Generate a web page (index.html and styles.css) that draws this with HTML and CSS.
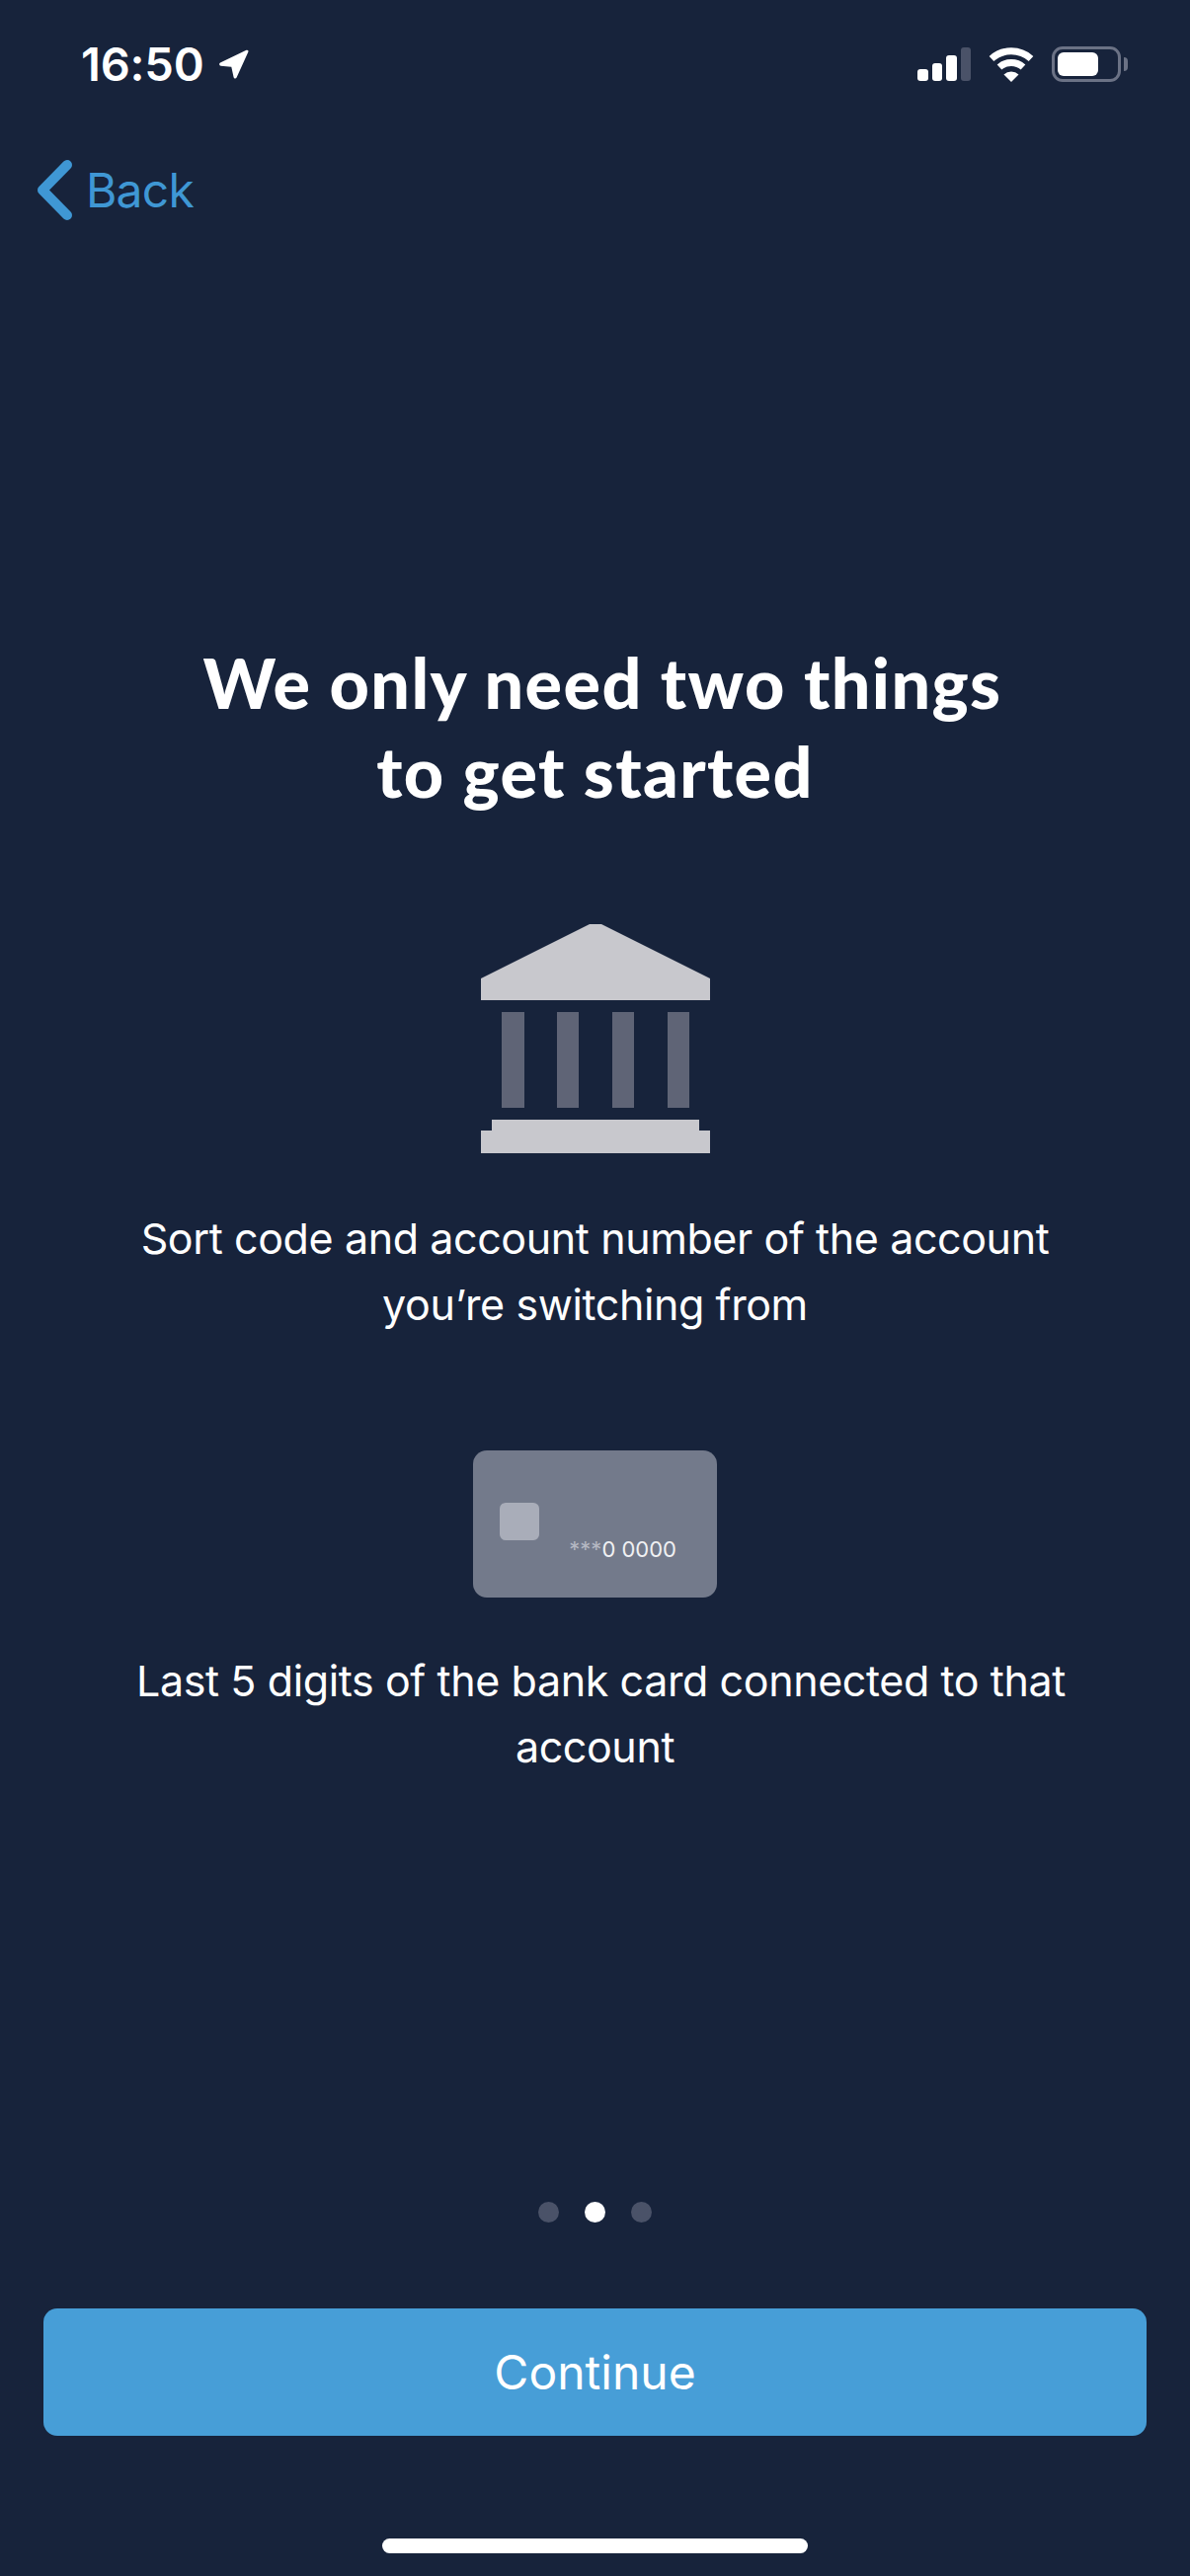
FILE: index.html
```html
<!DOCTYPE html>
<html lang="en">
<head>
  <meta charset="UTF-8" />
  <meta name="viewport" content="width=device-width, initial-scale=1.0" />
  <title>We only need two things to get started</title>
  <link rel="stylesheet" href="styles.css">
</head>
<body>
  <header class="status">
    <div class="time-wrap">
      <span class="time">16:50</span>
      <svg class="location" viewBox="0 0 32 32" aria-hidden="true">
        <path d="M2 14.500 28.500 1.800c1.300-.6 2.400.5 1.900 1.800L18.600 29.600c-.7 1.500-2.600 1.300-3-.3l-2.300-10.600L2.600 17.800C.9 17.500.6 15.300 2 14.500Z" />
      </svg>
    </div>
    <div class="status-icons">
      <div class="signal">
        <span class="bar bar-1"></span>
        <span class="bar bar-2"></span>
        <span class="bar bar-3"></span>
        <span class="bar bar-4"></span>
      </div>
      <svg class="wifi" viewBox="0 0 46 36" aria-hidden="true">
        <path d="M3 12.500a30 30 0 0 1 40 0" />
        <path d="M11 21a18 18 0 0 1 24 0" />
        <path class="wifi-dot" d="M23 36 15.500 28.500a11 11 0 0 1 15 0Z" />
      </svg>
      <div class="battery">
        <div class="battery-body"><div class="battery-level"></div></div>
        <div class="battery-nub"></div>
      </div>
    </div>
  </header>

  <nav class="nav">
    <a class="back">
      <svg class="chevron" viewBox="0 0 35 61" aria-hidden="true">
        <path d="M30 5 5 30.500 30 56" />
      </svg>
      <span>Back</span>
    </a>
  </nav>

  <main>
    <h1 class="title"><span class="nudge-title">We only need two things</span><br>to get started</h1>

    <section class="need need-bank">
      <svg class="bank" viewBox="0 0 232 232" aria-hidden="true">
        <path class="bank-light" d="M110 0h12L232 55v22H0V55Z" />
        <rect class="bank-dim" x="21" y="89" width="23" height="97" />
        <rect class="bank-dim" x="77" y="89" width="22" height="97" />
        <rect class="bank-dim" x="133" y="89" width="22" height="97" />
        <rect class="bank-dim" x="189" y="89" width="22" height="97" />
        <path class="bank-light" d="M11 198H221V209H232V232H0V209H11Z" />
      </svg>
      <p>Sort code and account number of the account<br>you’re switching from</p>
    </section>

    <section class="need need-card">
      <div class="card">
        <div class="chip"></div>
        <div class="card-number"><span class="stars">***</span>0 0000</div>
      </div>
      <p><span class="nudge-text">Last 5 digits of the bank card connected to that</span><br>account</p>
    </section>
  </main>

  <div class="dots">
    <span class="dot"></span>
    <span class="dot active"></span>
    <span class="dot"></span>
  </div>

  <button class="continue">Continue</button>

  <div class="home-indicator"></div>
</body>
</html>
```

FILE: styles.css
```css
* {
  box-sizing: border-box;
}
body {
  margin: 0;
  height: 100vh;
  overflow: hidden;
  background-color: #17233b;
  color: #fff;
  font-family: 'Inter', 'Liberation Sans', sans-serif;
  display: flex;
  flex-direction: column;
  align-items: center;
}
.status {
  width: 100%;
  height: 96px;
  padding: 47px 63px 0 82px;
  display: flex;
  justify-content: space-between;
  align-items: flex-start;
}
.time-wrap {
  display: flex;
  align-items: center;
  gap: 14px;
  height: 36px;
}
.time {
  font-size: 47px;
  font-weight: 600;
  line-height: 36px;
  letter-spacing: -0.2px;
}
.location {
  width: 32px;
  height: 32px;
  fill: #fff;
}
.status-icons {
  display: flex;
  align-items: flex-end;
  height: 36px;
}
.signal {
  display: flex;
  align-items: flex-end;
  gap: 4px;
  margin-right: 18px;
  height: 34px;
  margin-bottom: 1px;
}
.bar {
  width: 10.500px;
  background-color: #fff;
  border-radius: 3px;
}
.bar-1 { height: 12px; }
.bar-2 { height: 18px; }
.bar-3 { height: 26px; }
.bar-4 { height: 34px; background-color: #4a5268; }
.wifi {
  width: 46px;
  height: 36px;
  margin-right: 18px;
  fill: none;
  stroke: #fff;
  stroke-width: 7;
}
.wifi-dot {
  fill: #fff;
  stroke: none;
}
.battery {
  display: flex;
  align-items: center;
  gap: 3px;
  height: 36px;
}
.battery-body {
  width: 70px;
  height: 36px;
  padding: 3px;
  border: 3px solid #6b7285;
  border-radius: 11px;
}
.battery-level {
  width: 41px;
  height: 100%;
  background-color: #fff;
  border-radius: 6px;
}
.battery-nub {
  width: 4px;
  height: 14px;
  background-color: #6b7285;
  border-radius: 0 4px 4px 0;
}
.nav {
  width: 100%;
  height: 138px;
  padding: 66px 0 0 38px;
  flex-shrink: 0;
}
.back {
  display: flex;
  align-items: center;
  gap: 14px;
  color: #3f97d4;
  font-size: 48px;
  line-height: 61px;
  letter-spacing: -0.8px;
}
.chevron {
  width: 35px;
  height: 61px;
  fill: none;
  stroke: #3f97d4;
  stroke-width: 10;
  stroke-linecap: round;
  stroke-linejoin: round;
}
main {
  width: 100%;
  padding-top: 412px;
  text-align: center;
  flex: 1;
}
.title {
  margin: 0;
  font-family: 'Lato', sans-serif;
  font-size: 70px;
  font-weight: 900;
  line-height: 90px;
  letter-spacing: 1.400px;
}
.nudge-title {
  margin-left: 15px;
}
.nudge-text {
  margin-left: 12px;
}
.need {
  display: flex;
  flex-direction: column;
  align-items: center;
}
.need p {
  margin: 0;
  font-size: 43px;
  line-height: 67px;
  font-weight: 400;
  letter-spacing: -0.4px;
}
.need-bank {
  margin-top: 110px;
}
.bank {
  width: 232px;
  height: 232px;
  margin-bottom: 53px;
}
.bank-light {
  fill: #c8c8cd;
}
.bank-dim {
  fill: #5f6476;
}
.need-card {
  margin-top: 114px;
}
.card {
  width: 247px;
  height: 149px;
  margin-bottom: 51px;
  padding: 53px 41px 0 27px;
  background-color: #737a8b;
  border-radius: 14px;
  display: flex;
  justify-content: space-between;
  align-items: flex-start;
}
.chip {
  width: 40px;
  height: 38px;
  background-color: #a9adb9;
  border-radius: 6px;
}
.card-number {
  margin-top: 34px;
  font-size: 22px;
  line-height: 26px;
  color: #f0f1f3;
  white-space: nowrap;
}
.stars {
  color: #b5b8c3;
}
.dots {
  display: flex;
  gap: 26px;
  margin-bottom: 87px;
}
.dot {
  width: 21px;
  height: 21px;
  border-radius: 50%;
  background-color: #4a5268;
}
.dot.active {
  background-color: #fff;
}
.continue {
  width: 1117px;
  height: 129px;
  margin-bottom: 104px;
  background-color: #479ed7;
  color: #fff;
  border: none;
  border-radius: 14px;
  font-family: inherit;
  font-size: 48px;
  font-weight: 400;
  flex-shrink: 0;
}
.home-indicator {
  width: 431px;
  height: 15px;
  margin-bottom: 23px;
  background-color: #fff;
  border-radius: 8px;
  flex-shrink: 0;
}
```
